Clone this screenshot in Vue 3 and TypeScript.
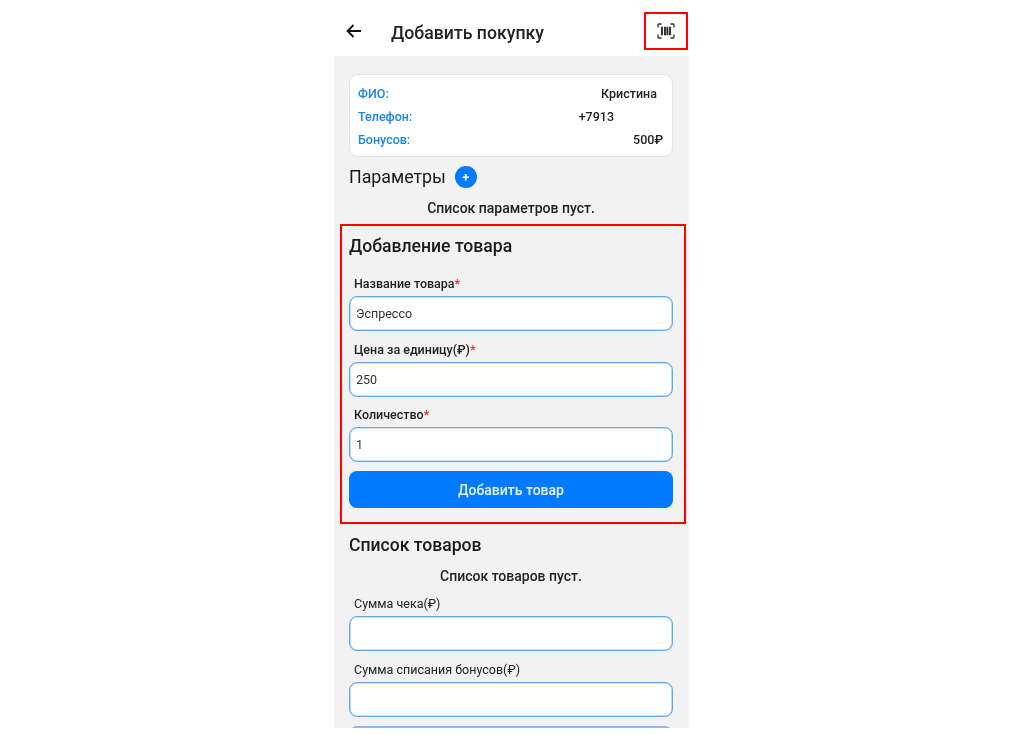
<script setup lang="ts">
interface InfoRow { label: string; value: string; cls: string }
interface Field { label: string; value: string; required: boolean }

const info: InfoRow[] = [
  { label: 'ФИО:', value: 'Кристина', cls: 'v-name' },
  { label: 'Телефон:', value: '+7913', cls: 'v-phone' },
  { label: 'Бонусов:', value: '500₽', cls: 'v-bonus' },
]
const productFields: Field[] = [
  { label: 'Название товара', value: 'Эспрессо', required: true },
  { label: 'Цена за единицу(₽)', value: '250', required: true },
  { label: 'Количество', value: '1', required: true },
]
const totalFields: Field[] = [
  { label: 'Сумма чека(₽)', value: '', required: false },
  { label: 'Сумма списания бонусов(₽)', value: '', required: false },
]
</script>

<template>
  <div class="page">
    <div class="phone">
      <header class="bar">
        <svg class="back" width="16" height="14" viewBox="0 0 16 14" fill="none" stroke="#111" stroke-width="1.9">
          <path d="M15 7H2M7.5 1 1.6 7l5.9 6" />
        </svg>
        <h1 class="title">Добавить покупку</h1>
        <div class="scan">
          <svg width="18" height="16" viewBox="0 0 18 16" fill="none" stroke="#2a2a2a" stroke-width="1.3">
            <path d="M1 4.5V2a1 1 0 0 1 1-1h2.5M13.5 1H16a1 1 0 0 1 1 1v2.5M1 11.5V14a1 1 0 0 0 1 1h2.5M13.5 15H16a1 1 0 0 0 1-1v-2.5" />
            <path d="M5 3.8v8.4M8 3.8v8.4M10.4 3.8v8.4M13 3.8v8.4" stroke-width="1.9" />
          </svg>
        </div>
      </header>

      <main class="content">
        <section class="card">
          <div v-for="row in info" :key="row.label" class="info-row">
            <span class="info-label">{{ row.label }}</span>
            <span class="info-value" :class="row.cls">{{ row.value }}</span>
          </div>
        </section>

        <div class="params">
          <h2 class="heading">Параметры</h2>
          <span class="plus">+</span>
        </div>
        <p class="empty empty-params">Список параметров пуст.</p>

        <section class="product">
          <h2 class="heading strong product-heading">Добавление товара</h2>
          <div v-for="f in productFields" :key="f.label" class="field">
            <label class="label">{{ f.label }}<span v-if="f.required" class="req">*</span></label>
            <div class="input">{{ f.value }}</div>
          </div>
          <button class="btn" type="button">Добавить товар</button>
          <div class="mark"></div>
        </section>

        <h2 class="heading strong list-heading">Список товаров</h2>
        <p class="empty empty-list">Список товаров пуст.</p>
        <div v-for="f in totalFields" :key="f.label" class="field total">
          <label class="label light">{{ f.label }}</label>
          <div class="input"></div>
        </div>
        <button class="btn btn-off" type="button"></button>
      </main>
    </div>
  </div>
</template>

<style>
html, body { margin: 0; background: #fff; }
</style>

<style scoped>
.page { display: flex; justify-content: center; width: 1025px; box-sizing: border-box; font-family: Roboto, "Noto Sans", sans-serif; color: #1a1a1a; }
.phone { width: 355px; height: 728px; overflow: hidden; background: #f2f2f2; margin-right: 2px; display: flex; flex-direction: column; filter: blur(0.35px); }
.bar { height: 56px; flex: none; background: #fff; display: flex; align-items: center; padding: 0 1px 0 12px; position: relative; box-sizing: border-box; }
.back { margin-top: 6px; flex: none; }
.title { margin: 9px 0 0 29px; font-size: 17.7px; font-weight: 500; line-height: 24px; flex: 1; color: #222; }
.scan { width: 40px; height: 34px; border: 2px solid #f00; display: flex; align-items: center; justify-content: center; position: absolute; left: 310px; top: 12px; background: #fff; }
.content { padding: 18px 16px 0 15px; display: flex; flex-direction: column; }
.card { height: 83px; box-sizing: border-box; background: #fff; border: 1px solid #e4e4e4; border-radius: 9px; padding: 7px 9px 0 8px; }
.info-row { height: 23px; display: flex; justify-content: space-between; align-items: center; font-size: 12.5px; font-weight: 500; transform: translateY(-0.5px); }
.info-label { color: #1a86ee; }
.info-value { color: #222; }
.v-name { margin-right: 6px; }
.v-phone { margin-right: 49px; }
.params { display: flex; align-items: center; height: 24px; margin-top: 8px; }
.heading { margin: 0; font-size: 17.8px; font-weight: 400; line-height: 24px; color: #1a1a1a; }
.heading.strong { font-size: 17.6px; font-weight: 500; }
.plus { width: 22px; height: 22px; border-radius: 50%; background: #007bff; color: #fff; display: flex; align-items: center; justify-content: center; font-size: 13px; font-weight: 700; margin-left: 9px; }
.empty { margin: 0; text-align: center; font-size: 14px; font-weight: 500; line-height: 20px; color: #222; }
.empty-params { margin-top: 9px; }
.product { position: relative; margin-top: 6px; padding-top: 10px; height: 300px; box-sizing: border-box; }
.product-heading { height: 24px; margin-bottom: 18px; }
.field { display: flex; flex-direction: column; }
.label { height: 16px; line-height: 16px; margin-left: 5px; margin-bottom: 4px; font-size: 12.5px; font-weight: 500; color: #222; }
.label.light { font-weight: 400; }
.req { color: #e53030; }
.input { height: 35px; box-sizing: border-box; background: #fff; border: 1px solid #5fa9ec; box-shadow: inset 0 0 0 0.6px #8fc3f2; border-radius: 8px; padding: 0 6px; font-size: 12.5px; line-height: 33px; color: #333; margin-bottom: 10.5px; }
.btn { display: block; width: 100%; height: 37px; padding: 0; border: none; border-radius: 8px; background: #007bff; color: #e8f2ff; font-family: inherit; font-size: 14px; font-weight: 500; margin-top: -1.5px; flex: none; }
.mark { position: absolute; left: -9px; right: -13px; top: 0; bottom: 0; border: 2px solid #f00; pointer-events: none; }
.list-heading { margin-top: 9px; }
.empty-list { margin-top: 9px; margin-bottom: 10px; }
.btn-off { background: #80bdff; }
</style>
